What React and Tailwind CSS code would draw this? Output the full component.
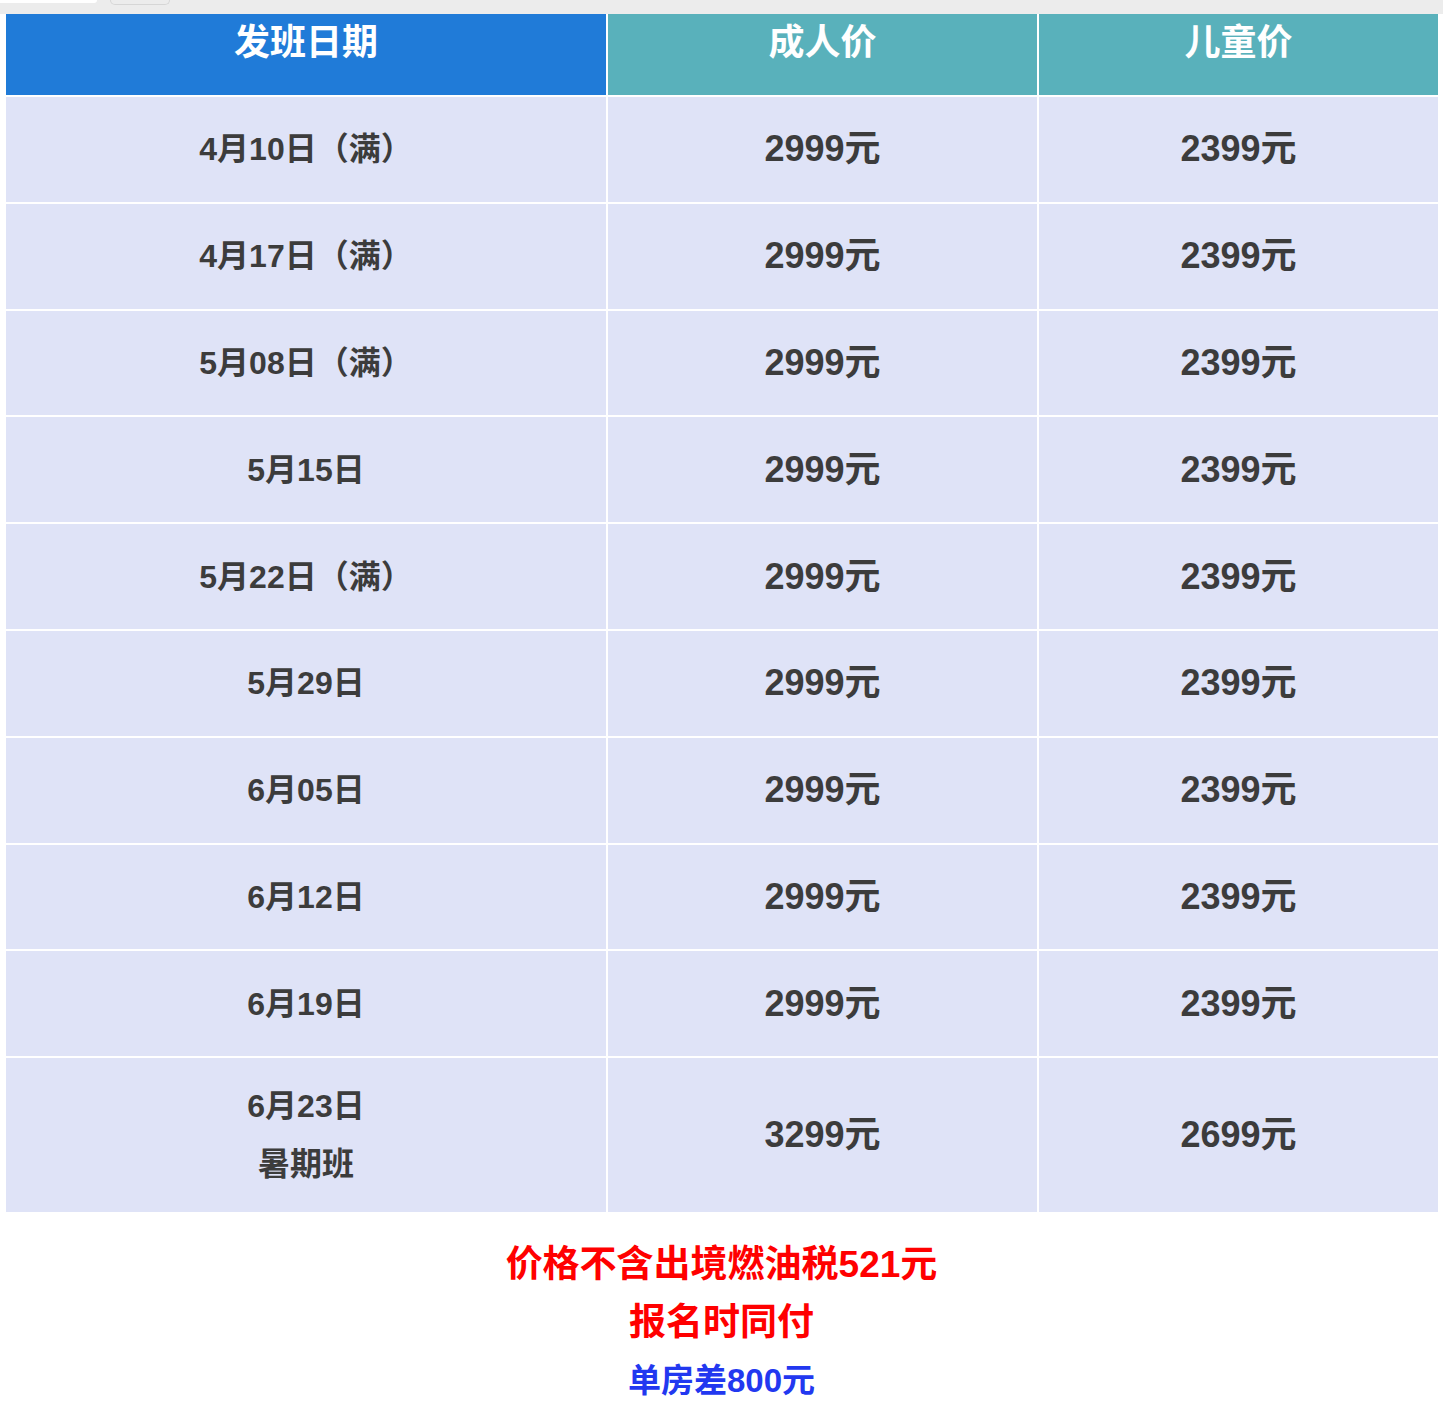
import React from 'react';

const rows = [
  { date: '4月10日（满）', adult: '2999元', child: '2399元' },
  { date: '4月17日（满）', adult: '2999元', child: '2399元' },
  { date: '5月08日（满）', adult: '2999元', child: '2399元' },
  { date: '5月15日', adult: '2999元', child: '2399元' },
  { date: '5月22日（满）', adult: '2999元', child: '2399元' },
  { date: '5月29日', adult: '2999元', child: '2399元' },
  { date: '6月05日', adult: '2999元', child: '2399元' },
  { date: '6月12日', adult: '2999元', child: '2399元' },
  { date: '6月19日', adult: '2999元', child: '2399元' },
];

const font = { fontFamily: '"Liberation Sans", "Noto Sans CJK SC", sans-serif' };

export default function App() {
  return (
    <div className="min-h-[1409px] bg-white" style={font}>
      {/* browser strip */}
      <div className="h-[14px] bg-[#ececec] flex items-start">
        <div className="w-[97px] h-[3px] bg-white rounded-br-[6px]" />
        <div className="ml-[13px] w-[60px] h-[5px] border border-t-0 border-[#d6d6d6] rounded-b-[6px]" />
      </div>

      <div className="pl-[6px]">
        <div className="grid grid-cols-[600px_429px_399px] gap-[2px] text-[#3c3c3c] font-bold">
          {/* header */}
          <div className="h-[81px] bg-[#207bd8] text-white text-[36px] text-center pt-[5px] leading-[48px]">发班日期</div>
          <div className="h-[81px] bg-[#59b1bb] text-white text-[36px] text-center pt-[5px] leading-[48px]">成人价</div>
          <div className="h-[81px] bg-[#59b1bb] text-white text-[36px] text-center pt-[5px] leading-[48px]">儿童价</div>

          {rows.map((r, i) => (
            <React.Fragment key={i}>
              <div className="h-[104.8px] bg-[#dfe3f7] flex items-center justify-center text-[32px]">{r.date}</div>
              <div className="h-[104.8px] bg-[#dfe3f7] flex items-center justify-center text-[36px]">{r.adult}</div>
              <div className="h-[104.8px] bg-[#dfe3f7] flex items-center justify-center text-[36px]">{r.child}</div>
            </React.Fragment>
          ))}

          {/* summer row */}
          <div className="h-[154px] bg-[#dfe3f7] flex flex-col items-center justify-center text-[32px] leading-[58px]">
            <div>6月23日</div>
            <div>暑期班</div>
          </div>
          <div className="h-[154px] bg-[#dfe3f7] flex items-center justify-center text-[36px]">3299元</div>
          <div className="h-[154px] bg-[#dfe3f7] flex items-center justify-center text-[36px]">2699元</div>
        </div>
      </div>

      {/* notes */}
      <div className="pt-[24px] text-center font-bold">
        <div className="text-[37px] leading-[58px] text-[#ff0000]">价格不含出境燃油税521元</div>
        <div className="text-[37px] leading-[58px] text-[#ff0000]">报名时同付</div>
        <div className="text-[33px] leading-[58px] text-[#2238f0]">单房差800元</div>
      </div>
    </div>
  );
}
